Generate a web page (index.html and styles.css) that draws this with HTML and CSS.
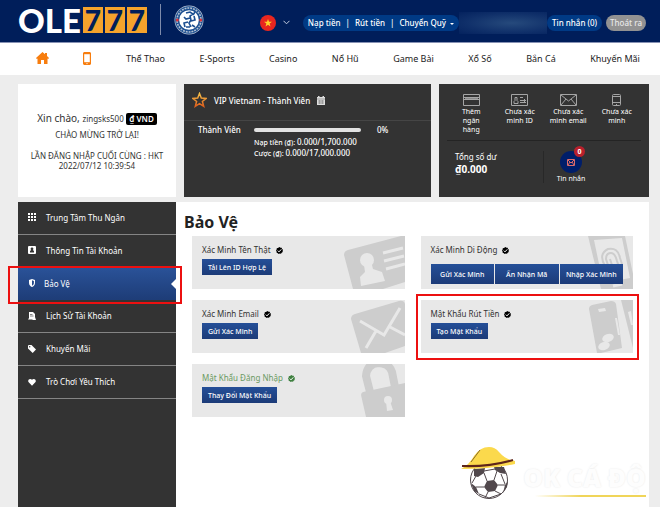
FILE: index.html
```html
<!DOCTYPE html>
<html lang="vi">
<head>
    <meta charset="UTF-8">
    <meta name="viewport" content="width=device-width, initial-scale=1.0">
    <title>OLE777 - Bảo Vệ</title>
    <link rel="stylesheet" href="styles.css">
</head>
<body>
    <!-- Shared icons -->
    <svg class="sprite" aria-hidden="true">
        <symbol id="check" viewBox="0 0 14 14">
            <path fill="currentColor" d="M7 0l2 1.3 2.4.2.7 2.3L14 5.5 13.200 7.800l.3 2.400-2.200 1.200L10 13.400l-2.400-.3L5.400 14l-1.700-1.700-2.400-.7-.1-2.400L0 7l1.300-2L1.500 2.600l2.300-.7z"/>
            <path fill="none" stroke="#fff" stroke-width="2" d="M3.500 7.200l2.500 2.500 4.600-5"/>
        </symbol>
    </svg>

    <header class="topbar">
        <a class="logo" href="#" aria-label="OLE777"><span class="logo-ole">OLE</span><span class="seven">7</span><span class="seven">7</span><span class="seven">7</span></a>
        <svg class="club" viewBox="0 0 30 30" aria-hidden="true">
            <circle cx="15" cy="15" r="14.500" fill="#b9c4d4"/>
            <circle cx="15" cy="15" r="13.800" fill="#1d4f91"/>
            <circle cx="15" cy="15" r="12" fill="none" stroke="#b3c1d2" stroke-width="1.600" stroke-dasharray="1.500 .8" pathLength="60"/>
            <circle cx="15" cy="15" r="9.800" fill="#fff"/>
            <circle cx="3.300" cy="15" r="1.500" fill="#d8343c"/>
            <circle cx="26.700" cy="15" r="1.500" fill="#d8343c"/>
            <path fill="none" stroke="#1d4f91" stroke-width="1.600" d="M12 8l4-1 3 2-3 2 1 4-2 3 2 4M16 13l-4 1-2-2M14 17l-4 1 1 4M17 16l4-1-1-4M12 22h4M19 10l2-3M18 20l3 2"/>
        </svg>
        <div class="top-actions">
            <button class="lang" type="button" aria-label="Tiếng Việt">
                <svg width="16" height="16" viewBox="0 0 16 16"><circle cx="8" cy="8" r="8" fill="#e8261f"/><path fill="#ffd42a" d="M8 4l1 2.800h3L9.600 8.600l.9 2.900L8 9.800l-2.500 1.700.9-2.900L4 6.800h3z"/></svg>
                <svg width="7" height="5" viewBox="0 0 7 5"><path fill="none" stroke="#c5cee0" d="M.5 .8l3 3 3-3"/></svg>
            </button>
            <div class="pill money">
                <a href="#">Nạp tiền</a><span>|</span><a href="#">Rút tiền</a><span>|</span><a href="#">Chuyển Quỹ <i class="caret"></i></a>
            </div>
            <div class="hidden-name"></div>
            <a class="pill" href="#">Tin nhắn (0)</a>
            <button class="pill logout" type="button">Thoát ra</button>
        </div>
    </header>

    <nav class="main-nav">
        <a href="#" aria-label="Trang chủ"><svg width="13" height="12" viewBox="0 0 13 12"><path fill="#f77d0e" d="M6.500 0l2.500 2.200V1h2v3l2 2-.8.900L11.500 6.400V12H8V8H5v4H1.500V6.400L.8 6.900 0 6z"/></svg></a>
        <a href="#" aria-label="Di động"><svg width="8" height="13" viewBox="0 0 8 13"><path fill="#f77d0e" d="M1 0h6l1 1v11l-1 1H1l-1-1V1z"/><path fill="#fff" d="M1.200 2.200h5.600v8H1.200z"/><circle cx="4" cy="11.600" r=".6" fill="#fff"/></svg></a>
        <a href="#">Thể Thao</a>
        <a href="#">E-Sports</a>
        <a href="#">Casino</a>
        <a href="#">Nổ Hũ</a>
        <a href="#">Game Bài</a>
        <a href="#">Xổ Số</a>
        <a href="#">Bắn Cá</a>
        <a href="#">Khuyến Mãi</a>
    </nav>

    <div class="page">
        <section class="summary">
            <div class="panel welcome">
                <p class="hello">Xin chào, <span class="user">zingsks500</span> <b class="currency">₫ VND</b></p>
                <p class="greeting">CHÀO MỪNG TRỞ LẠI!</p>
                <p>LẦN ĐĂNG NHẬP CUỐI CÙNG : HKT<br>2022/07/12 10:39:54</p>
            </div>

            <div class="panel vip">
                <div class="vip-head">
                    <svg width="15" height="16" viewBox="0 0 15 16">
                        <defs><linearGradient id="gold" x1="0" y1="0" x2="0" y2="1"><stop offset="0" stop-color="#f5c04a"/><stop offset="1" stop-color="#e0601c"/></linearGradient></defs>
                        <path fill="none" stroke="url(#gold)" stroke-width="1.500" d="M7.500 1.500l1.800 4.600 4.900.3-3.800 3.100 1.300 4.800-4.200-2.700-4.200 2.700 1.300-4.800L.8 6.400l4.900-.3z"/>
                    </svg>
                    <span>VIP Vietnam - Thành Viên</span>
                    <svg width="8" height="9" viewBox="0 0 8 9"><path fill="#ddd" d="M0 1h1V0h1.500v1h3V0H7v1h1v8H0z"/><path stroke="#777" stroke-width=".6" d="M0 3h8M1 5h6M1 7h6M2.700 4v4M5.300 4v4"/></svg>
                </div>
                <div class="vip-level">
                    <span id="level">Thành Viên</span>
                    <div class="track" role="progressbar" aria-labelledby="level" aria-valuenow="0"></div>
                    <span class="percent">0%</span>
                    <p class="level-info">Nạp tiền (₫): <b>0.000/1,700.000</b><br>Cược (₫): <b>0.000/17,000.000</b></p>
                </div>
            </div>

            <div class="panel account">
                <div class="verify">
                    <a href="#"><svg width="17" height="12" viewBox="0 0 17 12"><path fill="none" stroke="#a5a5a5" d="M.5 .5h16v11H.5zM1 3.500h15M1 5.500h15"/><path stroke="#888" d="M2 4.500h13"/></svg>Thêm<br>ngân<br>hàng</a>
                    <a href="#"><svg width="17" height="12" viewBox="0 0 17 12"><path fill="none" stroke="#a5a5a5" d="M.5 .5h16v11H.5zM3 9.500v-2l1-1V3.500h2v3l1 1v2zM9 3.500h3M9 6.500h6M9 8.500h6M13.500 5v4"/></svg>Chưa xác<br>minh ID</a>
                    <a href="#"><svg width="17" height="12" viewBox="0 0 17 12"><path fill="none" stroke="#a5a5a5" d="M.5 .5h16v11H.5zM1 1l7.500 6L16 1M1 11l5-6M16 11l-5-6"/></svg>Chưa xác<br>minh email</a>
                    <a href="#"><svg width="17" height="12" viewBox="0 0 17 12"><rect x="4.500" y=".5" width="8" height="11" rx="1" fill="none" stroke="#a5a5a5"/><path fill="none" stroke="#a5a5a5" d="M5 2.500h7M5 8.500h7M8 10.500h1"/></svg>Chưa xác<br>minh</a>
                </div>
                <div class="balance">
                    <div class="total">Tổng số dư<strong>₫0.000</strong></div>
                    <a class="inbox" href="#">
                        <span class="inbox-icon"><svg width="8" height="7" viewBox="0 0 8 7"><path fill="none" stroke="#dc6b6b" d="M.5 .5h7v6h-7zM1 1l3 3 3-3M1 6l2-3M7 6L5 3"/></svg><b class="badge">0</b></span>
                        Tin nhắn
                    </a>
                </div>
            </div>
        </section>

        <div class="workspace">
            <aside class="sidebar">
                <ul>
                    <li><a href="#"><svg viewBox="0 0 8 8"><path d="M0 0h2v2H0zM3 0h2v2H3zM6 0h2v2H6zM0 3h2v2H0zM3 3h2v2H3zM6 3h2v2H6zM0 6h2v2H0zM3 6h2v2H3zM6 6h2v2H6z"/></svg>Trung Tâm Thu Ngân</a></li>
                    <li><a href="#"><svg viewBox="0 0 8 8"><rect width="8" height="8" rx="1"/><path fill="#333" d="M4 1.500a1.300 1.300 0 0 1 .8 2.400L6 5v1.500H2V5l1.200-1.100A1.300 1.300 0 0 1 4 1.500z"/></svg>Thông Tin Tài Khoản</a></li>
                    <li class="active marked"><a href="#"><svg viewBox="0 0 8 8"><path d="M1 1l3-1 3 1v3c0 2-1.500 3.500-3 4-1.500-.5-3-2-3-4z"/><path fill="#254a8c" d="M4 1.200l1.900.7v2.200C5.900 5.400 5 6.300 4 6.800z"/></svg>Bảo Vệ</a></li>
                    <li><a href="#"><svg viewBox="0 0 8 8"><path d="M1 0h4l2 2v3l1 3H5L4 7.500H0L1 6z"/><path stroke="#333" stroke-width=".6" d="M2 2.500h2.500M2 4h3.500"/></svg>Lịch Sử Tài Khoản</a></li>
                    <li><a href="#"><svg viewBox="0 0 8 8"><path d="M0 .5L.5 0h3L8 4.500 4.700 8 0 3.500z"/><circle cx="1.700" cy="1.700" r=".7" fill="#333"/></svg>Khuyến Mãi</a></li>
                    <li><a href="#"><svg viewBox="0 0 8 8"><path d="M4 7.700L.7 4.300C-1 2 2 -.5 4 1.800 6 -.5 9 2 7.300 4.300z"/></svg>Trò Chơi Yêu Thích</a></li>
                </ul>
            </aside>

            <main class="content">
                <h1>Bảo Vệ</h1>
                <div class="cards">
                    <section class="card">
                        <svg class="art" viewBox="0 0 62 53"><path fill="#cdcdcd" d="M5 14L58 0h4v46L40 53H10L1 19q0-4 4-5z"/><circle cx="24" cy="24" r="7"/><path d="M21 29h8l1 4 9 3 3 9-24 5-1-9 5-5z"/><path class="line" d="M40 17l20-5M41 25l20-5M43 33l19-5"/></svg>
                        <h2>Xác Minh Tên Thật <svg class="check"><use href="#check"/></svg></h2>
                        <div class="buttons"><button type="button">Tải Lên ID Hợp Lệ</button></div>
                    </section>
                    <section class="card">
                        <svg class="art" viewBox="0 0 62 53"><path fill="#cdcdcd" d="M17 0h37l8 38v15H30z"/><path d="M23 4l28-2 8 40-27 5z"/><path class="print" d="M34 30q-7-12 3-17 10-2 12 9l2 6M38 32l-3-9q0-6 5-6 4 0 6 8l2 6M42 32l-3-9"/><path class="line" d="M42 50l9-2"/></svg>
                        <h2>Xác Minh Di Động <svg class="check"><use href="#check"/></svg></h2>
                        <div class="buttons triple"><button type="button">Gửi Xác Minh</button><button type="button">Ấn Nhận Mã</button><button type="button">Nhập Xác Minh</button></div>
                    </section>
                    <section class="card">
                        <svg class="art" viewBox="0 0 62 53"><path fill="#cdcdcd" d="M12 14L56 1q5-1 6 3v42L42 53H18L8 19q0-4 4-5z"/><path class="line" d="M17 21l24 14L57 8M33 31L23 48M47 27l15 8"/></svg>
                        <h2>Xác Minh Email <svg class="check"><use href="#check"/></svg></h2>
                        <div class="buttons"><button type="button">Gửi Xác Minh</button></div>
                    </section>
                    <section class="card marked">
                        <svg class="art" viewBox="0 0 62 53"><path fill="#cdcdcd" d="M21 5l19-4q4 0 5 3l6 44-21 5h-4L18 9q0-3 3-4zM50 0h12v48z"/><path d="M27 9l7-1 1 3-7 1zM44 18h2l3 17h-2zM57 12l3-1 2 14h-2z"/><ellipse cx="37" cy="38" rx="6" ry="4" transform="rotate(-20 37 38)"/><ellipse cx="33" cy="46" rx="6" ry="4" transform="rotate(-20 33 46)"/></svg>
                        <h2>Mật Khẩu Rút Tiền <svg class="check"><use href="#check"/></svg></h2>
                        <div class="buttons"><button type="button">Tạo Mật Khẩu</button></div>
                    </section>
                    <section class="card done">
                        <svg class="art" viewBox="0 0 62 53"><path fill="none" stroke="#cdcdcd" stroke-width="8" d="M27 28L23 12Q24 0 35-1 46-1 49 8l3 15"/><path fill="#cdcdcd" d="M20 28l42-9v34H23l-5-22q0-2 2-3z"/><circle cx="45" cy="36" r="4"/><path d="M43 37h4l3 9-6 1z"/></svg>
                        <h2>Mật Khẩu Đăng Nhập <svg class="check"><use href="#check"/></svg></h2>
                        <div class="buttons"><button type="button">Thay Đổi Mật Khẩu</button></div>
                    </section>
                </div>

                <div class="watermark">
                    <svg width="55" height="53" viewBox="0 0 55 53" aria-hidden="true">
                        <circle cx="28" cy="33" r="18.500" fill="#fff" stroke="#51484c"/>
                        <path fill="#51484c" d="M26 34l7-1 4 5-3 6-7 1-4-5zM13 22l11-1-1 5-6 4-4-1zM33 20l10 0 2 7-6-1-5-3zM10 36l5 4 3 7-5-3zM47 34l-3 4-2 8 4-6z"/>
                        <path fill="none" stroke="#51484c" d="M23 26l3 8M15 29l-4 7M23 40l-8 0M27 45l-3 6M34 44l6 3M37 38l7 0M33 33l3-9M40 27l4 10M23 24l11-2M18 47l10 4 12-4"/>
                        <path fill="#fbd94c" d="M0 22Q8 18 13 9 19 0 28 0q6 0 10 5 7 8 16 9v3Q30 22 0 22z"/>
                        <path fill="none" stroke="#5e251a" stroke-width="2" d="M1 19q27 1 51-6"/>
                        <path stroke="#8a6b28" d="M10 15L19 3"/>
                    </svg>
                    <div class="brand">OK CÁ ĐỘ</div>
                </div>
            </main>
        </div>
    </div>
</body>
</html>
```

FILE: styles.css
```css
* {
    box-sizing: border-box;
}

body {
    margin: 0;
    min-height: 100vh;
    display: flex;
    flex-direction: column;
    background: #ededed;
    color: #333;
    font-family: "Noto Sans", "Open Sans", sans-serif;
    font-size: 8px;
}

a {
    color: inherit;
    text-decoration: none;
}

p, h1, h2, ul {
    margin: 0;
    padding: 0;
}

button {
    border: none;
    font: inherit;
    color: inherit;
    cursor: pointer;
}

svg {
    flex-shrink: 0;
}

.sprite {
    position: absolute;
    width: 0;
    height: 0;
}

/* Top bar */
.topbar {
    display: flex;
    align-items: center;
    height: 43px;
    padding: 0 14px 3px 18px;
    background: #001e5a;
    border-bottom: 1px solid #8792b4;
    color: #fff;
}

.logo {
    display: flex;
    align-items: center;
    gap: 2px;
    padding-right: 13px;
    border-right: 1px solid #7e8bab;
    height: 31px;
    font-family: Lato, sans-serif;
    font-size: 33px;
    font-weight: 900;
    line-height: 26px;
}

.seven {
    width: 20px;
    height: 26px;
    background: #f5a32c;
    color: #001e5a;
    font-size: 28px;
    text-align: center;
}

.club {
    width: 30px;
    height: 30px;
    margin-left: 13px;
}

.top-actions {
    display: flex;
    align-items: center;
    margin-left: auto;
    padding-top: 6px;
    font-weight: 500;
}

.lang {
    display: flex;
    align-items: center;
    gap: 7px;
    margin-right: 13px;
    padding: 0;
    background: none;
}

.pill {
    display: flex;
    align-items: center;
    height: 16px;
    padding: 0 5px;
    border-radius: 8px;
    background: #003a85;
    white-space: nowrap;
}

.money {
    gap: 5px;
}

.caret {
    display: inline-block;
    margin-left: 2px;
    border: 2px solid transparent;
    border-top-color: #fff;
    border-bottom: 0;
    vertical-align: middle;
}

.hidden-name {
    width: 88px;
    height: 22px;
    background: radial-gradient(ellipse at 60% 50%, #264a7c, #10306a 60%, #04225e);
}

.logout {
    margin-left: 4px;
    padding: 0 4px;
    background: #929292;
    color: #e8e8e8;
}

/* Main menu */
.main-nav {
    display: flex;
    align-items: center;
    justify-content: space-between;
    height: 32px;
    padding: 0 20px 2px 36px;
    background: #fff;
    color: #222;
    font-size: 9px;
}

.main-nav svg {
    display: block;
}

.page {
    flex: 1;
    display: flex;
    flex-direction: column;
    gap: 5px;
    padding: 9px 11px 0 18px;
}

/* Summary panels */
.summary {
    display: grid;
    grid-template-columns: 158px 247fr 210fr;
    gap: 8px;
}

.panel {
    min-height: 113px;
    background: #333;
    color: #fff;
}

.welcome {
    display: flex;
    flex-direction: column;
    justify-content: center;
    background: #fff;
    color: #333;
    text-align: center;
    line-height: 10px;
}

.hello {
    font-size: 10px;
    line-height: 16px;
}

.user {
    font-size: 8px;
}

.currency {
    display: inline-block;
    padding: 0 3px;
    border-radius: 2px;
    background: #000;
    color: #fff;
    font-size: 8px;
    font-weight: 600;
    line-height: 12px;
}

.greeting {
    margin: 3px 0 11px;
}

.vip-head {
    display: flex;
    align-items: center;
    gap: 7px;
    height: 37px;
    padding: 0 8px 4px;
    border-bottom: 1px solid #454545;
    font-weight: 500;
}

.vip-level {
    display: grid;
    grid-template-columns: 56px 107px 1fr;
    align-items: center;
    padding: 3px 14px;
    font-weight: 500;
}

.track {
    height: 4px;
    border-radius: 2px;
    background: #e2e2e2;
}

.percent {
    padding-left: 16px;
}

.level-info {
    grid-column: 2 / 4;
    font-size: 7px;
    line-height: 10px;
    margin-top: 2px;
}

.level-info b {
    font-size: 8px;
    font-weight: 500;
}

.account {
    padding: 10px 8px 0;
    line-height: 9px;
}

.verify {
    display: grid;
    grid-template-columns: repeat(4, 1fr);
    height: 47px;
    border-bottom: 1px solid #242424;
    font-size: 7px;
    text-align: center;
    white-space: nowrap;
}

.verify svg {
    display: block;
    margin: 0 auto 1px;
}

.balance {
    display: flex;
    padding-top: 10px;
}

.total {
    display: flex;
    flex-direction: column;
    gap: 4px;
    width: 97px;
    height: 32px;
    padding: 1px 8px;
    border-right: 1px solid #282828;
}

.total strong {
    font-size: 10px;
}

.inbox {
    display: flex;
    flex-direction: column;
    align-items: center;
    gap: 1px;
    width: 54px;
    font-size: 7px;
}

.inbox-icon {
    position: relative;
    display: flex;
    align-items: center;
    justify-content: center;
    width: 22px;
    height: 22px;
    border-radius: 50%;
    background: #001e6a;
}

.badge {
    position: absolute;
    top: -5px;
    right: -3px;
    width: 11px;
    height: 11px;
    border-radius: 50%;
    background: #b8202c;
    line-height: 11px;
    text-align: center;
}

/* Sidebar */
.workspace {
    flex: 1;
    display: flex;
    background: #fff;
}

.sidebar {
    flex: 0 0 158px;
    background: #333;
    color: #fff;
}

.sidebar ul {
    display: grid;
    grid-auto-rows: 1fr;
    height: 197px;
    list-style: none;
}

.sidebar li {
    position: relative;
    display: grid;
    border-bottom: 1px solid #858585;
}

.sidebar a {
    display: flex;
    align-items: center;
    gap: 10px;
    padding: 0 10px 1px;
}

.sidebar svg {
    width: 8px;
    height: 8px;
    fill: #fff;
}

.sidebar .active {
    background: linear-gradient(#2a5298, #1e3d78);
    border-bottom-color: #1e3d78;
}

.sidebar .active a {
    gap: 8px;
}

.active::before {
    content: "";
    position: absolute;
    top: 11px;
    right: 0;
    border: 5px solid transparent;
    border-right-color: #fff;
    border-left: 0;
}

/* Red frame round the highlighted step */
.marked::after {
    content: "";
    position: absolute;
    inset: -2px -6px -5px -10px;
    border: 2px solid #ec1010;
}

/* Security cards */
.content {
    position: relative;
    flex: 1;
    min-width: 0;
    padding: 10px 16px 90px;
}

.content h1 {
    margin: 0 0 4px -8px;
    color: #222;
    font-size: 16px;
    line-height: 20px;
}

.cards {
    display: grid;
    grid-template-columns: 1fr 1fr;
    gap: 11px 16px;
}

.card {
    position: relative;
    height: 53px;
    padding: 8px 10px;
    background: #e8e8e8;
}

.card.marked::after {
    inset: -6px -6px -7px -5px;
}

.art {
    position: absolute;
    top: 0;
    right: 0;
    width: 62px;
    height: 53px;
    fill: #e8e8e8;
}

.art .line {
    fill: none;
    stroke: #e8e8e8;
    stroke-width: 3;
}

.art .print {
    fill: none;
    stroke: #cdcdcd;
    stroke-width: 2;
}

.card h2 {
    position: relative;
    display: flex;
    align-items: center;
    gap: 5px;
    font-size: 8px;
    font-weight: 400;
    line-height: 12px;
}

.check {
    width: 7px;
    height: 7px;
    color: #000;
}

.done h2 {
    color: #6b9a62;
}

.done .check {
    color: #3f8040;
}

.buttons {
    position: relative;
    display: flex;
    margin-top: 3px;
}

.buttons button {
    height: 16px;
    padding: 0 6px;
    background: linear-gradient(#254f98, #1c3b78);
    color: #fff;
    font-size: 7px;
    font-weight: 500;
    white-space: nowrap;
}

.triple {
    margin-top: 8px;
    gap: 1px;
}

.triple button {
    flex: 1;
    height: 20px;
    padding: 0;
}

/* Watermark */
.watermark {
    position: absolute;
    right: 3px;
    bottom: 7px;
    display: flex;
    align-items: flex-end;
}

.brand {
    width: 130px;
    margin-bottom: 3px;
    padding-bottom: 3px;
    border-bottom: 2px solid;
    border-image: linear-gradient(90deg, transparent 15%, #f0d559 50%) 1;
    color: #fdfdfd;
    font-size: 25px;
    font-weight: 900;
    line-height: 30px;
    text-align: right;
    text-shadow: 0 0 2px #e8e8e8;
    white-space: nowrap;
}
```
